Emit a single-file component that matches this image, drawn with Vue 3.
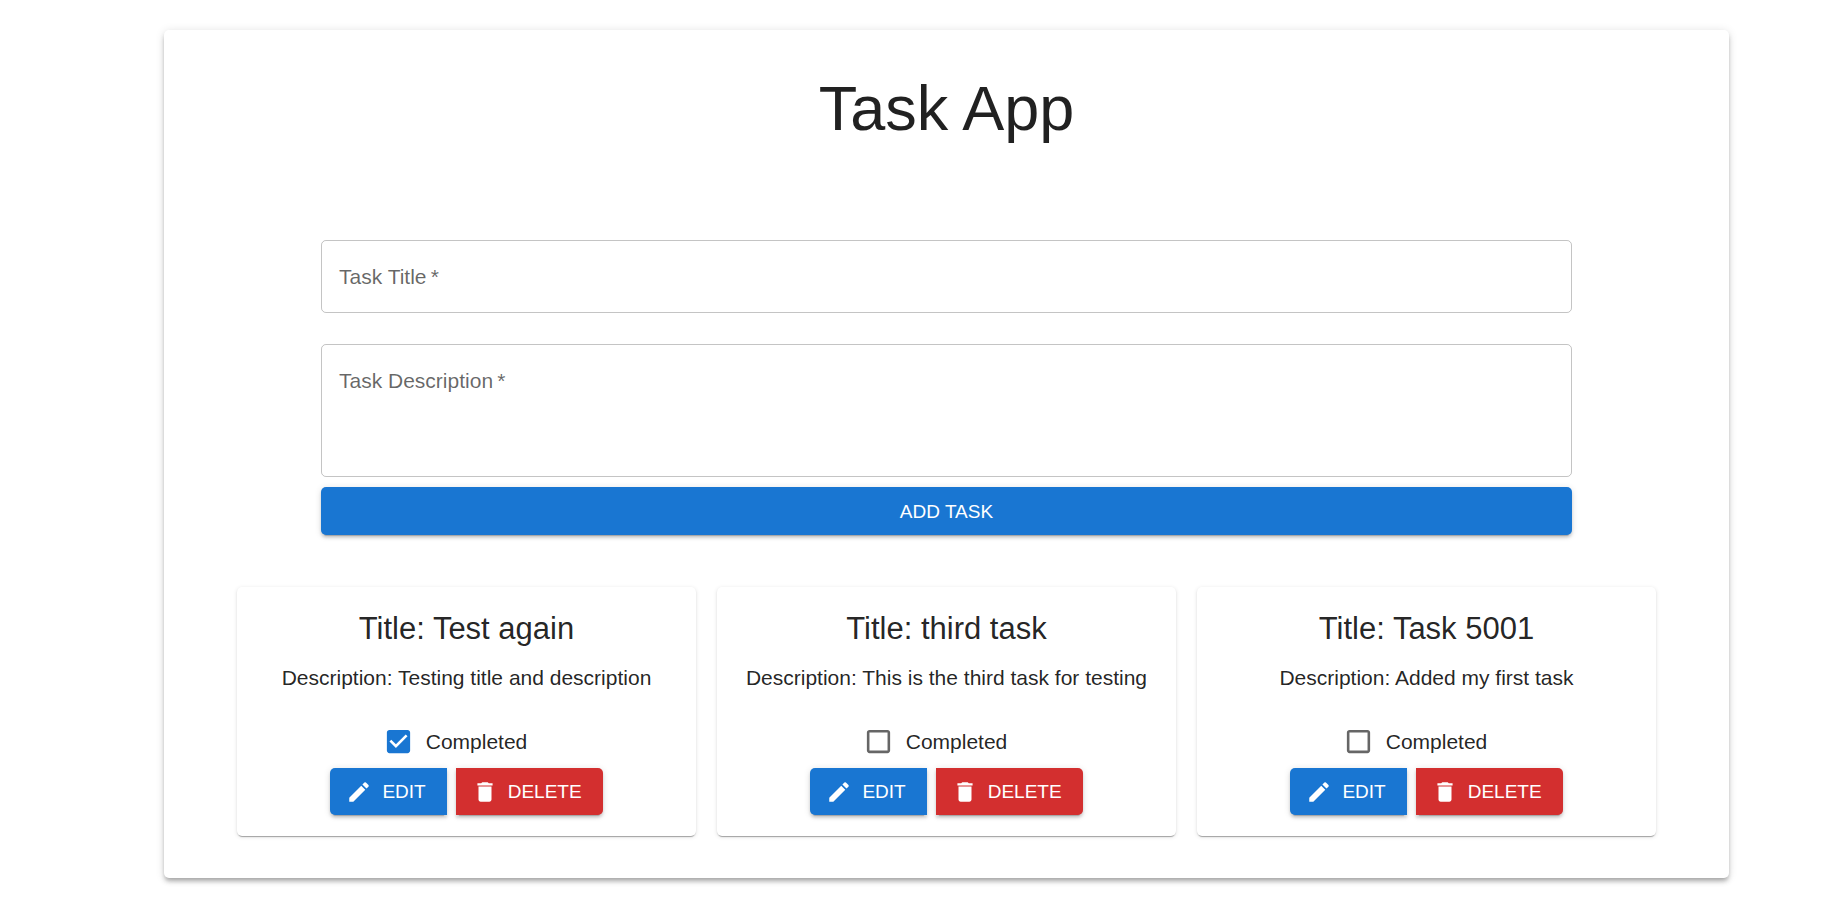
<script setup>
import { ref } from 'vue'

const title = ref('')
const description = ref('')

const tasks = ref([
  { id: 1, title: 'Test again', description: 'Testing title and description', completed: true },
  { id: 2, title: 'third task', description: 'This is the third task for testing', completed: false },
  { id: 3, title: 'Task 5001', description: 'Added my first task', completed: false }
])

let nextId = 4

function addTask() {
  tasks.value.push({ id: nextId++, title: title.value, description: description.value, completed: false })
  title.value = ''
  description.value = ''
}

function editTask(task) {
  title.value = task.title
  description.value = task.description
}

function deleteTask(id) {
  tasks.value = tasks.value.filter((task) => task.id !== id)
}
</script>

<template>
  <div class="page">
    <main class="paper">
      <h1 class="heading">Task App</h1>

      <form class="form" @submit.prevent="addTask">
        <div class="field">
          <input id="task-title" v-model="title" class="control" type="text" required />
          <label v-if="!title" class="field-label" for="task-title">Task Title&thinsp;*</label>
        </div>
        <div class="field">
          <textarea id="task-description" v-model="description" class="control area" required></textarea>
          <label v-if="!description" class="field-label" for="task-description">Task Description&thinsp;*</label>
        </div>
        <button class="button add" type="submit">ADD TASK</button>
      </form>

      <section class="tasks">
        <article v-for="task in tasks" :key="task.id" class="card">
          <h2 class="card-title">Title: {{ task.title }}</h2>
          <p class="card-text">Description: {{ task.description }}</p>
          <label class="check" :for="'done-' + task.id">
            <span class="check-box">
              <input :id="'done-' + task.id" v-model="task.completed" class="check-input" type="checkbox" />
              <svg v-if="task.completed" class="check-icon checked" viewBox="0 0 24 24" aria-hidden="true">
                <path d="M19 3H5c-1.11 0-2 .9-2 2v14c0 1.1.89 2 2 2h14c1.11 0 2-.9 2-2V5c0-1.1-.89-2-2-2zm-9 14l-5-5 1.41-1.41L10 14.17l7.59-7.59L19 8l-9 9z" />
              </svg>
              <svg v-else class="check-icon" viewBox="0 0 24 24" aria-hidden="true">
                <path d="M19 5v14H5V5h14m0-2H5c-1.1 0-2 .9-2 2v14c0 1.1.9 2 2 2h14c1.1 0 2-.9 2-2V5c0-1.1-.9-2-2-2z" />
              </svg>
            </span>
            <span>Completed</span>
          </label>
          <div class="actions">
            <button class="button edit" type="button" @click="editTask(task)">
              <svg class="button-icon" viewBox="0 0 24 24" aria-hidden="true">
                <path d="M3 17.25V21h3.75L17.81 9.94l-3.75-3.75L3 17.25zM20.71 7.04c.39-.39.39-1.02 0-1.41l-2.34-2.34a.9959.9959 0 0 0-1.41 0l-1.83 1.83 3.75 3.75 1.83-1.83z" />
              </svg>
              EDIT
            </button>
            <button class="button delete" type="button" @click="deleteTask(task.id)">
              <svg class="button-icon" viewBox="0 0 24 24" aria-hidden="true">
                <path d="M6 19c0 1.1.9 2 2 2h8c1.1 0 2-.9 2-2V7H6v12zM19 4h-3.5l-1-1h-5l-1 1H5v2h14V4z" />
              </svg>
              DELETE
            </button>
          </div>
        </article>
      </section>
    </main>
  </div>
</template>

<style>
body {
  margin: 0;
  background: #fff;
}
</style>

<style scoped>
.page {
  padding: 30px 94px 19px 164px;
  color: rgba(0, 0, 0, 0.87);
  font-family: "Liberation Sans", Arial, sans-serif;
  font-size: 21px;
  line-height: 31px;
}

.paper {
  padding: 42px 73px;
  border-radius: 5px;
  background: #fff;
  box-shadow:
    0 4px 4px -2px rgba(0, 0, 0, 0.2),
    0 4px 5px 0 rgba(0, 0, 0, 0.14),
    0 1px 10px 0 rgba(0, 0, 0, 0.12);
}

.heading {
  margin: 0 0 95px;
  font-size: 63px;
  font-weight: 400;
  line-height: 73px;
  text-align: center;
}

.form {
  display: flex;
  flex-direction: column;
  margin: 0 84px 52px;
}

.field {
  position: relative;
  display: flex;
  margin-bottom: 31px;
}

.field + .field {
  margin-bottom: 10px;
}

.control {
  box-sizing: border-box;
  width: 100%;
  height: 73px;
  margin: 0;
  padding: 20px 17px;
  border: 1px solid rgba(0, 0, 0, 0.23);
  border-radius: 5px;
  outline: none;
  background: transparent;
  color: inherit;
  font: inherit;
}

.control:focus {
  border-color: #1976d2;
}

.area {
  height: 133px;
  resize: none;
}

.field-label {
  position: absolute;
  top: 21px;
  left: 18px;
  color: rgba(0, 0, 0, 0.6);
  pointer-events: none;
}

.button {
  display: inline-flex;
  align-items: center;
  justify-content: center;
  padding: 8px 21px;
  border: 0;
  background: #1976d2;
  box-shadow:
    0 4px 1px -3px rgba(0, 0, 0, 0.2),
    0 3px 3px 0 rgba(0, 0, 0, 0.14),
    0 1px 7px 0 rgba(0, 0, 0, 0.12);
  color: #fff;
  font-family: inherit;
  font-size: 19px;
  line-height: 31px;
  cursor: pointer;
}

.add {
  min-height: 48px;
  border-radius: 5px;
}

.edit {
  border-radius: 5px 0 0 5px;
}

.delete {
  border-radius: 0 5px 5px 0;
  background: #d32f2f;
}

.button-icon {
  width: 26px;
  height: 26px;
  margin: 0 10px 0 -5px;
  fill: currentColor;
}

.tasks {
  display: grid;
  grid-template-columns: repeat(3, minmax(0, 1fr));
  gap: 21px;
}

.card {
  display: flex;
  flex-direction: column;
  align-items: center;
  padding: 21px;
  border-radius: 5px;
  background: #fff;
  box-shadow:
    0 3px 1px -2px rgba(0, 0, 0, 0.2),
    0 1px 1px 0 rgba(0, 0, 0, 0.14),
    0 1px 4px 0 rgba(0, 0, 0, 0.12);
  text-align: center;
}

.card-title {
  margin: 0 0 12px;
  font-size: 31px;
  font-weight: 400;
  line-height: 42px;
}

.card-text {
  margin: 0 0 21px;
}

.check {
  display: inline-flex;
  align-items: center;
  margin: 0 21px 0 -14px;
  cursor: pointer;
}

.check-box {
  display: grid;
  place-items: center;
  width: 55px;
  height: 54px;
}

.check-input,
.check-icon {
  grid-area: 1 / 1;
  width: 31px;
  height: 31px;
}

.check-input {
  margin: 0;
  appearance: none;
  cursor: pointer;
}

.check-icon {
  fill: rgba(0, 0, 0, 0.6);
  pointer-events: none;
}

.checked {
  fill: #1976d2;
}

.actions {
  display: flex;
  gap: 9px;
}
</style>
